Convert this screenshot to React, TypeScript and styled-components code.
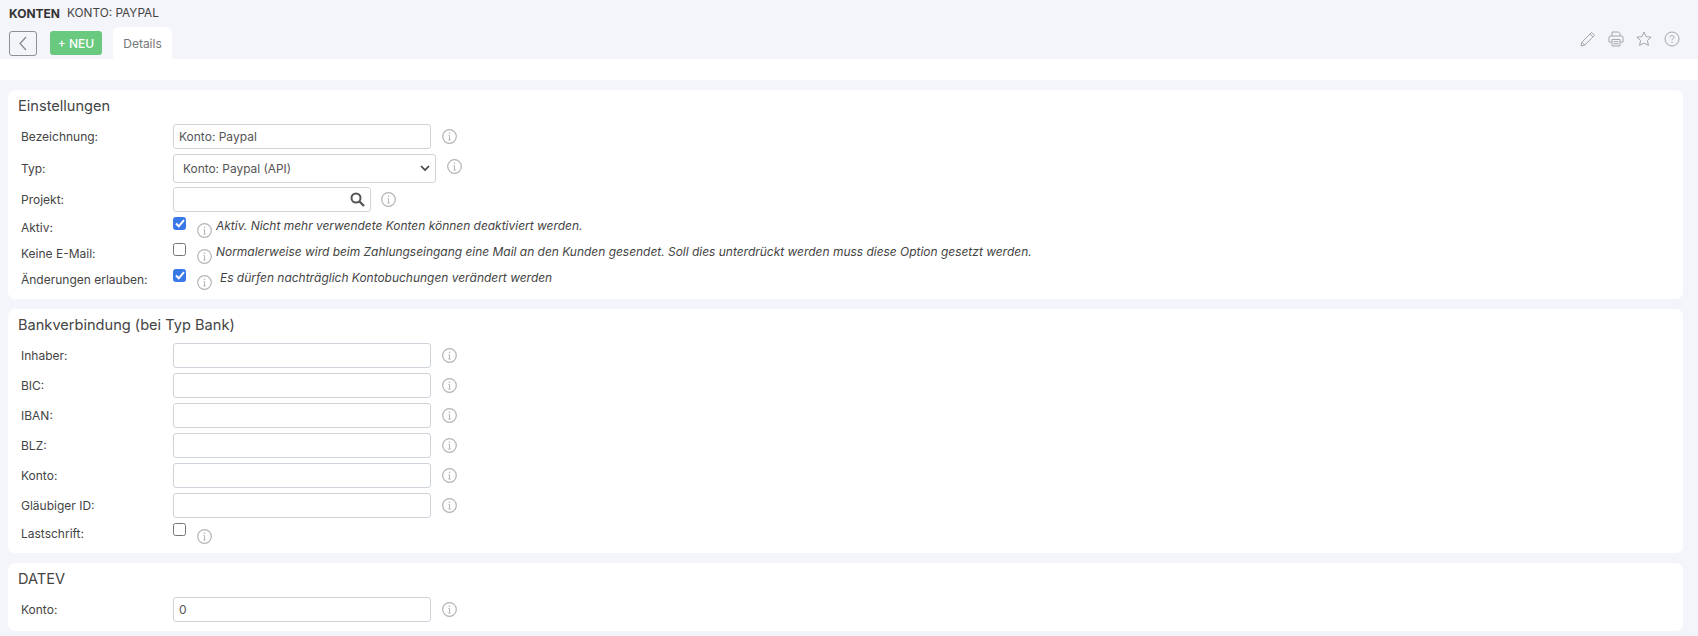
import React from "react";
import styled, { createGlobalStyle } from "styled-components";

const Global = createGlobalStyle`
  html, body { margin: 0; padding: 0; background: #fff; }
  body { font-family: Inter, "Liberation Sans", sans-serif; font-size: 12px; color: #444; }
  * { box-sizing: border-box; }
`;
const Page = styled.div`width: 1698px; height: 636px; overflow: hidden; background: #f4f5fa;`;
const Header = styled.header`height: 59px; background: #f4f5fa; padding: 6px 8px 0 9px;`;
const Crumbs = styled.div`display: flex; gap: 7px; height: 15px; align-items: center; font-size: 11.8px; line-height: 15px; color: #444;`;
const Strong = styled.b`font-weight: 700; color: #333; font-size: 12px;`;
const Toolbar = styled.div`display: flex; align-items: flex-start; margin-top: 6px; height: 32px;`;
const BackButton = styled.button`
  width: 28px; height: 25px; margin-top: 4px; padding: 0; display: flex; align-items: center; justify-content: center;
  background: transparent; border: 1px solid #8f8f8f; border-radius: 3px; color: #888;
`;
const NewButton = styled.button`
  width: 52px; height: 24px; margin: 4px 0 0 13px; padding: 0; border: 0; border-radius: 3px;
  background: #68c97f; color: #fff; font: 500 12px Inter, sans-serif;
`;
const Tab = styled.div`
  width: 59px; height: 32px; margin-left: 11px; background: #fff; border-radius: 6px 6px 0 0;
  color: #777; font-size: 12px; display: flex; align-items: center; justify-content: center; padding-top: 1px;
`;
const Actions = styled.div`margin-left: auto; display: flex; gap: 12px; padding: 4px 10px 0 0; color: #a6a6a6;`;
const WhiteStrip = styled.div`height: 21px; background: #fff;`;
const Main = styled.main`padding: 10px 15px 0 8px; display: flex; flex-direction: column; gap: 10px;`;
const Card = styled.section<{ $h: number }>`
  height: ${p => p.$h}px; background: #fff; border-radius: 7px; padding: 7px 10px 0;
`;
const Title = styled.h2`margin: 0 0 6px; font-size: 14.6px; line-height: 18px; font-weight: 400; color: #444;`;
const Row = styled.div<{ $h: number; $top?: number }>`
  height: ${p => p.$h}px; display: flex; align-items: center; padding: ${p => p.$top ?? 0}px 0 0 3px;
`;
const Label = styled.label`width: 152px; flex: none; font-size: 12px; color: #444;`;
const Field = styled.div<{ $w?: number }>`
  width: ${p => p.$w ?? 258}px; height: 25px; flex: none; border: 1px solid #ced4da; border-radius: 3px;
  background: #fff; padding: 0 5px; display: flex; align-items: center; justify-content: space-between; font-size: 12px; color: #555;
`;
const SelectBox = styled(Field)`padding: 0 5px 0 9px; height: 29px; font-size: 11.9px;`;
const Info = styled.span<{ $gap: number; $drop?: number }>`
  margin-left: ${p => p.$gap}px; flex: none; display: flex; color: #b4b4b4;
  transform: translateY(${p => p.$drop ?? 0}px);
`;
const Box = styled.span<{ $on?: boolean }>`
  width: 13px; height: 13px; flex: none; border-radius: 2.5px; display: flex; align-items: center; justify-content: center;
  background: ${p => (p.$on ? "#3b78e7" : "#fff")}; border: 1px solid ${p => (p.$on ? "#3b78e7" : "#767676")};
  transform: translateY(-4px);
`;
const Hint = styled.i<{ $pad?: number }>`margin-left: ${p => p.$pad ?? 4}px; font-size: 11.96px; color: #444; transform: translateY(-2px); white-space: nowrap;`;

const InfoIcon = () => (
  <svg width="15" height="15" viewBox="0 0 15 15" fill="none" stroke="currentColor">
    <circle cx="7.5" cy="7.5" r="6.8" strokeWidth="1.2" />
    <path d="M7.5 6.5v4.5M6.3 11h2.4M6.5 6.5h1" strokeWidth="1" />
    <circle cx="7.5" cy="4.2" r=".8" fill="currentColor" stroke="none" />
  </svg>
);
const Chevron = () => (
  <svg width="10" height="7" viewBox="0 0 10 7" fill="none" stroke="#444" strokeWidth="1.7"><path d="M1 1l4 4 4-4" /></svg>
);
const Check = () => (
  <svg width="10" height="9" viewBox="0 0 10 9" fill="none" stroke="#fff" strokeWidth="2"><path d="M1 4.5l2.8 2.8L9 1.2" /></svg>
);
const Glass = () => (
  <svg width="15" height="15" viewBox="0 0 15 15" fill="none" stroke="#555" strokeWidth="2">
    <circle cx="6" cy="6" r="4.5" /><path d="M9.5 9.5l4.5 4.5" strokeWidth="2.4" />
  </svg>
);

type Simple = { label: string; value?: string };
const TextRow = ({ label, value }: Simple) => (
  <Row $h={30}>
    <Label>{label}</Label>
    <Field>{value}</Field>
    <Info $gap={11}><InfoIcon /></Info>
  </Row>
);
const CheckRow = ({ label, on, hint, pad }: { label: string; on?: boolean; hint?: string; pad?: number }) => (
  <Row $h={26}>
    <Label>{label}</Label>
    <Box $on={on}>{on && <Check />}</Box>
    <Info $gap={11} $drop={3}><InfoIcon /></Info>
    {hint && <Hint $pad={pad}>{hint}</Hint>}
  </Row>
);

export default function App() {
  return (
    <Page>
      <Global />
      <Header>
        <Crumbs><Strong>KONTEN</Strong><span>KONTO: PAYPAL</span></Crumbs>
        <Toolbar>
          <BackButton aria-label="Zurück">
            <svg width="10" height="15" viewBox="0 0 10 15" fill="none" stroke="currentColor" strokeWidth="1.2"><path d="M8 1L2 7.5 8 14" /></svg>
          </BackButton>
          <NewButton>+ NEU</NewButton>
          <Tab>Details</Tab>
          <Actions>
            <svg width="16" height="16" viewBox="0 0 16 16" fill="none" stroke="currentColor"><path d="M1 15l.9-3.8L11.6 1.4l2.9 2.9L4.8 14.1zM1.9 11.2l2.9 2.9M10 3l2.9 2.9" /></svg>
            <svg width="16" height="16" viewBox="0 0 16 16" fill="none" stroke="currentColor"><path d="M4 5V1h6.5L12 2.6V5M4 11H1V6.2C1 5.5 1.5 5 2.2 5h11.6c.7 0 1.2.5 1.2 1.2V11h-3M4 8.5h8v6.5H4zM5.5 10.7h5M5.5 12.8h5" /></svg>
            <svg width="16" height="16" viewBox="0 0 16 16" fill="none" stroke="currentColor"><path d="M8 1l2.1 4.7 5 .5-3.7 3.3 1 4.9L8 12l-4.4 2.4 1-4.9L.9 6.2l5-.5z" /></svg>
            <svg width="16" height="16" viewBox="0 0 16 16" fill="none" stroke="currentColor"><circle cx="8" cy="8" r="7" /><path d="M6 6.3C6 5 7 4.5 8 4.5s2 .7 2 1.8c0 1.4-2 1.5-2 3" /><circle cx="8" cy="11.3" r=".7" fill="currentColor" stroke="none" /></svg>
          </Actions>
        </Toolbar>
      </Header>
      <WhiteStrip />
      <Main>
        <Card $h={209}>
          <Title>Einstellungen</Title>
          <TextRow label="Bezeichnung:" value="Konto: Paypal" />
          <Row $h={33} $top={2}>
            <Label>Typ:</Label>
            <SelectBox $w={263}>Konto: Paypal (API)<Chevron /></SelectBox>
            <Info $gap={11} $drop={-2}><InfoIcon /></Info>
          </Row>
          <Row $h={30}>
            <Label>Projekt:</Label>
            <Field $w={198}><span /><Glass /></Field>
            <Info $gap={10}><InfoIcon /></Info>
          </Row>
          <CheckRow label="Aktiv:" on hint="Aktiv. Nicht mehr verwendete Konten können deaktiviert werden." />
          <CheckRow label="Keine E-Mail:" hint="Normalerweise wird beim Zahlungseingang eine Mail an den Kunden gesendet. Soll dies unterdrückt werden muss diese Option gesetzt werden." />
          <CheckRow label="Änderungen erlauben:" on hint="Es dürfen nachträglich Kontobuchungen verändert werden" pad={8} />
        </Card>
        <Card $h={244}>
          <Title>Bankverbindung (bei Typ Bank)</Title>
          <TextRow label="Inhaber:" />
          <TextRow label="BIC:" />
          <TextRow label="IBAN:" />
          <TextRow label="BLZ:" />
          <TextRow label="Konto:" />
          <TextRow label="Gläubiger ID:" />
          <CheckRow label="Lastschrift:" />
        </Card>
        <Card $h={68}>
          <Title>DATEV</Title>
          <TextRow label="Konto:" value="0" />
        </Card>
      </Main>
    </Page>
  );
}
